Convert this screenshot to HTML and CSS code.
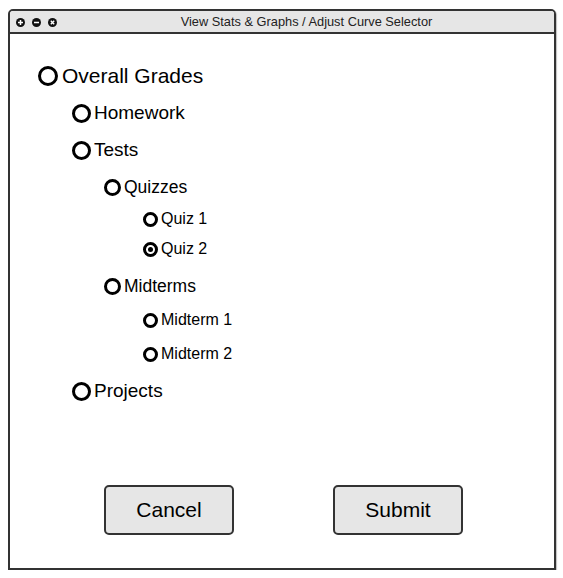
FILE: index.html
```html
<!DOCTYPE html>
<html>
<head>
<meta charset="utf-8">
<link rel="stylesheet" href="styles.css">
</head>
<body>
<div class="window">
  <div class="titlebar">
    <div class="controls">
      <span class="ctl">
        <svg width="9" height="9" viewBox="0 0 9 9"><circle cx="4.5" cy="4.5" r="4.5" fill="#111"/><path d="M4.5 2V7M2 4.5H7" stroke="#fff" stroke-width="1.5"/></svg>
      </span>
      <span class="ctl">
        <svg width="9" height="9" viewBox="0 0 9 9"><circle cx="4.5" cy="4.5" r="4.5" fill="#111"/><path d="M2 4.5H7" stroke="#fff" stroke-width="1.7"/></svg>
      </span>
      <span class="ctl">
        <svg width="9" height="9" viewBox="0 0 9 9"><circle cx="4.5" cy="4.5" r="4.5" fill="#111"/><path d="M2.8 2.8L6.2 6.2M6.2 2.8L2.8 6.2" stroke="#fff" stroke-width="1.4"/></svg>
      </span>
    </div>
    <div class="title">View Stats &amp; Graphs / Adjust Curve Selector</div>
  </div>
  <div class="content">
    <div class="tree">
      <div class="row l0"><span class="radio"></span><span class="label">Overall Grades</span></div>
      <div class="group g1">
        <div class="row l1"><span class="radio"></span><span class="label">Homework</span></div>
        <div class="row l1"><span class="radio"></span><span class="label">Tests</span></div>
        <div class="group g2">
          <div class="row l2"><span class="radio"></span><span class="label">Quizzes</span></div>
          <div class="group g3">
            <div class="row l3 first"><span class="radio"></span><span class="label">Quiz 1</span></div>
            <div class="row l3 tight"><span class="radio checked"></span><span class="label">Quiz 2</span></div>
          </div>
          <div class="row l2 after"><span class="radio"></span><span class="label">Midterms</span></div>
          <div class="group g3">
            <div class="row l3 first-m"><span class="radio"></span><span class="label">Midterm 1</span></div>
            <div class="row l3 loose"><span class="radio"></span><span class="label">Midterm 2</span></div>
          </div>
        </div>
        <div class="row l1 after"><span class="radio"></span><span class="label">Projects</span></div>
      </div>
    </div>
    <div class="buttons">
      <button class="btn">Cancel</button>
      <button class="btn">Submit</button>
    </div>
  </div>
</div>
</body>
</html>
```
FILE: styles.css
```css
html, body {
  margin: 0;
  padding: 0;
  background: #fff;
}
body {
  font-family: "Liberation Sans", Arial, sans-serif;
  color: #000;
}
.window {
  box-sizing: border-box;
  margin: 9px 0 0 8px;
  width: 548px;
  height: 561px;
  border: 2px solid #333;
  border-radius: 5px 5px 0 0;
  display: flex;
  flex-direction: column;
  box-shadow: 1px 1px 1px rgba(0,0,0,0.25);
  overflow: hidden;
}
.titlebar {
  height: 21px;
  background: #e6e6e6;
  border-bottom: 2px solid #333;
  display: flex;
  align-items: center;
}
.controls {
  display: flex;
  gap: 7px;
  padding-left: 6px;
  padding-top: 1px;
}
.ctl {
  display: block;
  width: 9px;
  height: 9px;
}
.ctl svg {
  display: block;
}
.title {
  flex: 1;
  text-align: center;
  font-size: 12.8px;
  color: #222;
  padding-left: 2px;
}
.content {
  flex: 1;
  display: flex;
  flex-direction: column;
  background: #fff;
}
.tree {
  padding-top: 27px;
  padding-left: 28px;
}
.row {
  display: flex;
  align-items: center;
  height: 30px;
  margin-top: 7px;
}
.row.l0 {
  margin-top: 0;
}
.g1 { padding-left: 34px; }
.g2 { padding-left: 32px; }
.g3 { padding-left: 39px; }
.radio {
  box-sizing: border-box;
  border-radius: 50%;
  border: 3px solid #000;
  flex: none;
  position: relative;
}
.label {
  white-space: nowrap;
}
.l0 .radio { width: 20px; height: 20px; }
.l0 .label { font-size: 21px; margin-left: 4px; }
.l1 .radio { width: 19px; height: 19px; }
.l1 .label { font-size: 19px; margin-left: 3px; }
.l2 .radio { width: 17px; height: 17px; }
.l2 .label { font-size: 17.5px; margin-left: 3px; }
.l3 { height: 26px; }
.l3 .radio { width: 15px; height: 15px; }
.l3 .label { font-size: 16px; margin-left: 3px; }
.row.first { margin-top: 4px; }
.row.tight { margin-top: 4px; }
.row.after { margin-top: 9px; }
.row.first-m { margin-top: 6px; }
.row.loose { margin-top: 8px; }
.radio.checked::after {
  content: "";
  position: absolute;
  left: 50%;
  top: 50%;
  width: 5px;
  height: 5px;
  margin: -2.5px 0 0 -2.5px;
  border-radius: 50%;
  background: #000;
}
.buttons {
  margin-top: auto;
  display: flex;
  gap: 99px;
  padding-left: 94px;
  padding-bottom: 33px;
}
.btn {
  box-sizing: border-box;
  width: 130px;
  height: 50px;
  background: #e6e6e6;
  border: 2px solid #333;
  border-radius: 5px;
  font-family: "Liberation Sans", Arial, sans-serif;
  font-size: 21px;
  color: #000;
  padding: 0;
}
```
